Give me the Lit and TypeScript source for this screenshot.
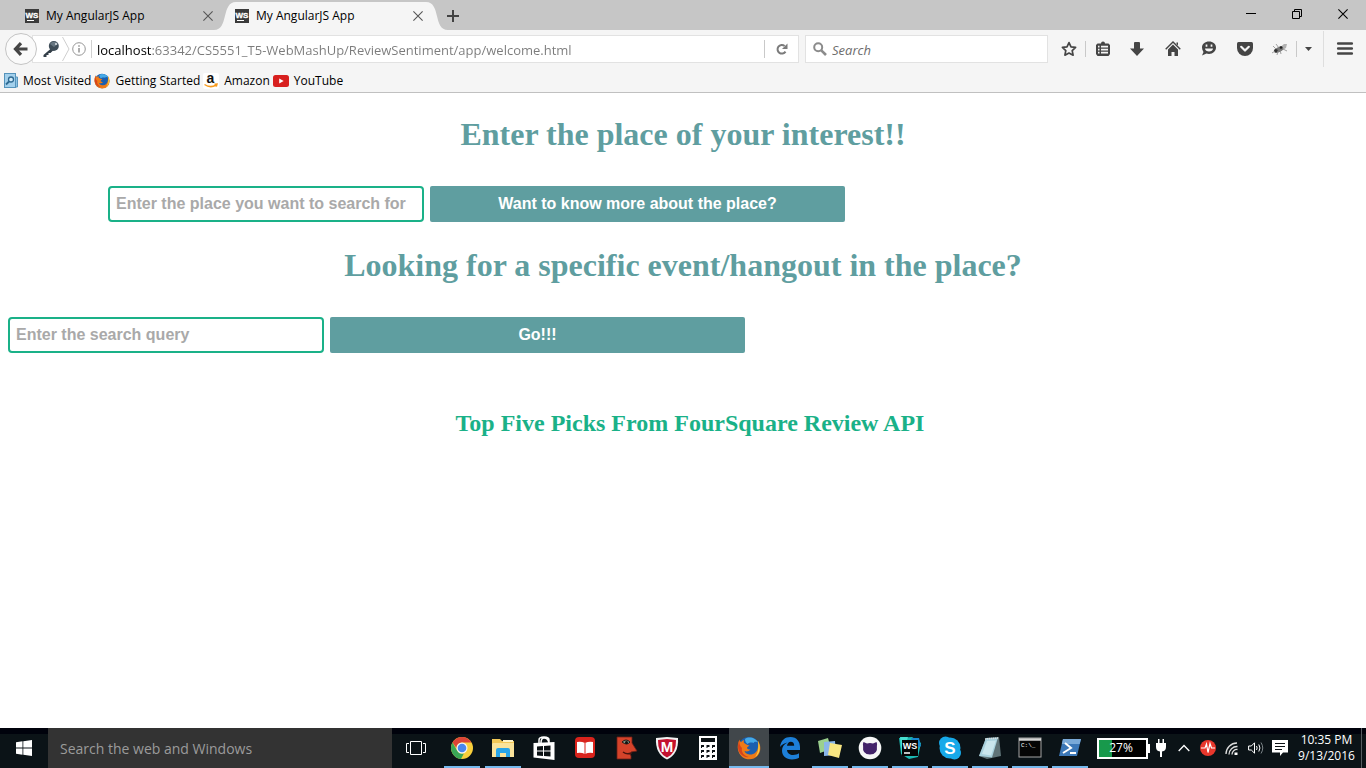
import { LitElement, html, svg, css } from "lit";
import { customElement, state } from "lit/decorators.js";

const wsBadge = html`<svg width="14" height="14" viewBox="0 0 14 14" aria-hidden="true">
  <rect width="14" height="14" fill="#3b3b3b" />
  <text x="7" y="9" text-anchor="middle" font-family="Liberation Sans, sans-serif" font-weight="700" font-size="8" fill="#fff" stroke="#fff" stroke-width=".3">WS</text>
  <rect x="2" y="11" width="7" height="1" fill="#fff" />
</svg>`;

const cross = (w: number, color: string) => html`<svg width=${w} height=${w} viewBox="0 0 10 10" aria-hidden="true">
  <path d="M0.4 0.4 9.6 9.6M9.6 0.4 0.4 9.6" stroke=${color} stroke-width="1.1" fill="none" />
</svg>`;

const firefoxArt = svg`
  <circle cx="12" cy="12" r="11" fill="#1c5fae" />
  <path d="M8 3C12 0 19 2 21.500 7c-3-2-4-1-5 0-3-1-5 0-6 1C9 7 8 5 8 3Z" fill="#45a9e6" />
  <path d="M2.500 3.500C1 7 .3 10 1 14c1.500 6 6 9.300 11.500 9.300C19 23.300 23.500 18 23.300 12c0-3-1-5.500-2.300-7 .5 2 .5 4 0 6-.5 5-4.500 8-8.500 7.500-3-.3-4.500-2-5-3.500 2 1 4.500.5 6-1.500-2 0-3-.5-3.500-1.500.3-1.500 2-1.500 2.500-2.500-1.500-.5-3.500-.7-4.500-2C6.500 7 6.500 5.500 7 4 5.500 4.500 4.500 5.500 4 6.200 3 5.500 2.500 4.500 2.500 3.500Z" fill="#ee7a16" />
  <path d="M21 5c3 6 2 13-3 16 3-4 4-8 3-16Z" fill="#fbcf3d" />
  <path d="M2.500 4C2 8 3 10 5 12c-1 4 2 8 7 9-6 1-11-4-11-10 0-3 .5-5 1.500-7Z" fill="#d8441a" />`;

const icons = {
  back: html`<svg width="16" height="14" viewBox="0 0 16 14"><path d="M8 1.200 2.500 7 8 12.800M3 7h11.500" fill="none" stroke="#454545" stroke-width="3.200" /></svg>`,
  key: html`<svg width="18" height="18" viewBox="0 0 18 18">
    <path d="M9 8.500 1.500 15v2h3v-2h2v-2h2l3-3Z" fill="#343f48" />
    <circle cx="11.800" cy="6" r="5" fill="#3f4d58" /><path d="M8 4c2-3 6-3 8 0l-4 3Z" fill="#677681" /><circle cx="14" cy="4" r="1" fill="#dfe4e8" />
  </svg>`,
  chevron: html`<svg width="8" height="24" viewBox="0 0 8 24"><path d="M.5 0 7 12 .5 24" fill="none" stroke="#cfcfcf" /></svg>`,
  info: html`<svg width="14" height="14" viewBox="0 0 14 14"><circle cx="7" cy="7" r="6.300" fill="none" stroke="#969696" /><path d="M7 6v4.500M7 3.300v1.400" stroke="#8b8b8b" stroke-width="1.400" /></svg>`,
  reload: html`<svg width="12" height="12" viewBox="0 0 12 12"><path d="M8.600 3A4.300 4.300 0 1 0 9.500 8.600" fill="none" stroke="#7b7b7b" stroke-width="2" /><path d="M11.500.5v5.500H6Z" fill="#7b7b7b" /></svg>`,
  magnifier: html`<svg width="14" height="14" viewBox="0 0 14 14"><circle cx="5.200" cy="5.200" r="4" fill="none" stroke="#8b8b8b" stroke-width="2" /><path d="m8.300 8.300 4.700 4.700" stroke="#8b8b8b" stroke-width="2.600" /></svg>`,
  star: html`<svg width="16" height="16" viewBox="0 0 16 16"><path d="m8 1.600 2 4.200 4.600.6-3.400 3.200.9 4.600L8 12l-4.100 2.200.9-4.600L1.400 6.400 6 5.800Z" fill="none" stroke="#454545" stroke-width="1.700" stroke-linejoin="round" /></svg>`,
  list: html`<svg width="14" height="16" viewBox="0 0 14 16"><path d="M5 2.500a2 2 0 0 1 4 0h3.500L14 4v9l-1.500 2h-11L0 13V4l1.500-1.500Z" fill="#454545" /><path d="M2 5.700h1.500M5 5.700h7M2 8.700h1.500M5 8.700h7M2 11.700h1.500M5 11.700h7" stroke="#f5f5f5" stroke-width="1.700" /></svg>`,
  download: html`<svg width="14" height="14" viewBox="0 0 14 14"><path d="M4 1q0-1 1-1h4q1 0 1 1v5.500h4L7 14 0 6.500h4Z" fill="#454545" /></svg>`,
  home: html`<svg width="16" height="15" viewBox="0 0 16 15"><path d="M.7 8.300 8 1l7.300 7.300" fill="none" stroke="#454545" stroke-width="1.400" /><path d="M8 3.500 13 8.500V15H9.500v-4h-3v4H3V8.500ZM11.500 1.500H13v3l-1.500-1.500Z" fill="#454545" /></svg>`,
  chat: html`<svg width="16" height="15" viewBox="0 0 16 15"><path d="M8 .5c4 0 7 2.500 7 6s-3 6.500-7 6.500c-1 0-2-.2-2.500-.4L1 14.500l1.500-3.600C1.500 9.500 1 8 1 6.500c0-3.500 3-6 7-6Z" fill="#454545" /><path d="M4 7.500h8c0 4-8 4-8 0Z" fill="#f5f5f5" /><path d="M5.500 3.500v2.300M10.500 3.500v2.300" stroke="#f5f5f5" stroke-width="1.700" /></svg>`,
  pocket: html`<svg width="16" height="14" viewBox="0 0 16 14"><path d="M1.500 0h13Q16 0 16 1.500V6a8 8 0 0 1-16 0V1.500Q0 0 1.500 0Z" fill="#454545" /><path d="M4.200 4.800 8 8.500l3.800-3.700" fill="none" stroke="#f5f5f5" stroke-width="2.200" stroke-linecap="round" stroke-linejoin="round" /></svg>`,
  bug: html`<svg width="16" height="14" viewBox="0 0 16 14"><path d="M6 7 12 2l3 0-1 4-5 3Z" fill="#b1b1b1" /><ellipse cx="7" cy="7.500" rx="4.500" ry="2.500" transform="rotate(-25 7 7.500)" fill="#777" /><circle cx="3.800" cy="8.800" r="1.900" fill="#333" /><circle cx="9" cy="5.500" r="1.300" fill="#222" /><path d="m1 4 3 3M4 2l3 4M5 13l1-4M9 12 8 8M15 9l-4-2M0 11l3-2" stroke="#8c8c8c" stroke-width=".8" /></svg>`,
  caretDown: html`<svg width="7" height="4" viewBox="0 0 7 4"><path d="M0 0h7L3.500 4Z" fill="#454545" /></svg>`,
  menu: html`<svg width="16" height="14" viewBox="0 0 16 14"><path d="M1.200 1.500h13.600M1.200 6.500h13.600M1.200 11.500h13.600" stroke="#454545" stroke-width="2.600" stroke-linecap="round" /></svg>`,
  plus: html`<svg width="12" height="12" viewBox="0 0 12 12"><path d="M6 0v12M0 6h12" stroke="#424242" stroke-width="2" /></svg>`,
  minimize: html`<svg width="10" height="10" viewBox="0 0 10 10"><path d="M0 4.500h10" stroke="#000" /></svg>`,
  restore: html`<svg width="10" height="10" viewBox="0 0 10 10"><path d="M.5 2.500h7v7h-7ZM2.500 2.500v-2h7v7h-2" fill="none" stroke="#000" /></svg>`,
  visited: html`<svg width="14" height="16" viewBox="0 0 14 16"><path d="M10 4h3.500v10H10Z" fill="#8ec4e4" stroke="#5a96bd" /><rect x=".5" y=".5" width="11" height="14" fill="#a3d0ec" stroke="#5593bb" /><circle cx="7" cy="6.500" r="2.500" fill="#d2ebfa" stroke="#2f6b93" stroke-width="1.300" /><path d="m5 8.500-3 3" stroke="#2f6b93" stroke-width="1.800" /></svg>`,
  firefoxSmall: html`<svg width="16" height="16" viewBox="0 0 24 24">${firefoxArt}</svg>`,
  amazon: html`<svg width="16" height="16" viewBox="0 0 16 16"><rect width="16" height="16" rx="2" fill="#fff" /><text x="7.500" y="10" text-anchor="middle" font-family="Liberation Sans, sans-serif" font-weight="700" font-size="14" fill="#111">a</text><path d="M1.500 11.500q6 4 11.500.5M11.500 11.200l2.500-.2-.7 2.600" fill="none" stroke="#f79a1c" stroke-width="1.500" /></svg>`,
  youtube: html`<svg width="16" height="12" viewBox="0 0 16 12"><rect width="16" height="12" rx="2.500" fill="#d8201f" /><path d="M6.200 3.500v5l4.500-2.500Z" fill="#fff" /></svg>`,
  windows: html`<svg width="16" height="16" viewBox="0 0 16 16"><path d="M0 2.200 6.500 1.300v6.200H0ZM7.300 1.200 16 0v7.500H7.300ZM0 8.400h6.500v6.300L0 13.800ZM7.300 8.400H16V16l-8.700-1.200Z" fill="#fff" /></svg>`,
  taskView: html`<svg width="20" height="14" viewBox="0 0 20 14"><path d="M4.500.5h11v13h-11ZM3 2.500H.5v9H3M17 2.500h2.500v9H17" fill="none" stroke="#fff" /></svg>`,
};

const ic = (w: number, h: number, body: unknown) =>
  html`<svg width=${w} height=${h} viewBox="0 0 24 24" aria-hidden="true">${body}</svg>`;

interface TaskApp {
  name: string;
  art: unknown;
  running?: boolean;
  active?: boolean;
}

const pinned: TaskApp[] = [
  { name: "Chrome", running: true, art: ic(24, 24, svg`
    <circle cx="12" cy="12" r="11" fill="#f9cf3c" />
    <path d="M2.500 6.500A11 11 0 0 1 21.500 6.500H12A5.500 5.500 0 0 0 6.500 12Z" fill="#dc4437" />
    <path d="M2.500 6.500 7.200 14.700A5.500 5.500 0 0 0 14 17.200L11 23A11 11 0 0 1 2.500 6.500Z" fill="#3aa757" />
    <circle cx="12" cy="12" r="5.500" fill="#f4f4f4" /><circle cx="12" cy="12" r="4.300" fill="#4a87ee" />`) },
  { name: "File Explorer", running: true, art: ic(24, 24, svg`
    <path d="M1 3h8l2 2h12v16H1Z" fill="#f3c857" /><path d="M2 7h21v14H1V8Z" fill="#fbe39a" /><path d="M12 4h10v2H12Z" fill="#fff3c7" />
    <path d="M5 21v-7q0-2 2-2h10q2 0 2 2v7h-4v-4H9v4Z" fill="#2aa5e8" />`) },
  { name: "Store", art: ic(24, 24, svg`
    <path d="M7 8V4q0-3 5-3t5 3v4M9 7q0-5 3-5 4 0 5 5" fill="none" stroke="#fff" stroke-width="1.500" />
    <path d="M1.500 7 22.500 6v18L1.500 21.500Z" fill="#fff" /><path d="M5 10.500 11 10v4.500H5ZM12 10l6.500-.5v5H12ZM5 15.500h6V20l-6-.5ZM12 15.500h6.500v5L12 20Z" fill="#0b1114" />`) },
  { name: "Reader", art: ic(24, 24, svg`
    <rect x="2" y="1" width="20" height="21" rx="4" fill="#d9231c" /><path d="M4 6q4-1 8 1 4-2 8-1v11q-4-1-8 1-4-2-8-1Z" fill="#fff" /><path d="M12 7v11" stroke="#d9231c" />`) },
  { name: "Face", art: ic(24, 24, svg`
    <path d="M3 1h15v6l5 8-6 1v2h-1l1 2v3H3Z" fill="#d5432a" stroke="#6c1f16" stroke-width=".8" />
    <path d="M8 6q4-4 8 0-3 4-8 0Z" fill="#7a9181" stroke="#221917" /><circle cx="12.500" cy="6.500" r="1.500" fill="#15110f" /><path d="M9 16q4 3 8 1" stroke="#4c140e" stroke-width="1.500" fill="none" />`) },
  { name: "McAfee", art: ic(24, 24, svg`
    <path d="M1 2 12 1l11 1q1 16-11 21.500Q0 18 1 2Z" fill="#f2f2f2" /><path d="M3 4l9-1 9 1q.5 13-9 17.500Q2.500 17 3 4Z" fill="#c4122f" />
    <text x="12" y="16" text-anchor="middle" font-family="Liberation Sans, sans-serif" font-weight="700" font-size="15" fill="#fff">M</text>`) },
  { name: "Calculator", art: ic(24, 24, svg`
    <path d="M3 0h18v24H3Z" fill="#fff" /><path d="M5 2h14v4H5Z" fill="#0b1114" />
    <g fill="#0b1114">${[9, 14, 19].map((y) => [5, 10.500, 16].map((x) => svg`<path d="M${x} ${y}h3v2h-2v1h-1Z" />`))}</g>`) },
  { name: "Firefox", running: true, active: true, art: ic(24, 24, firefoxArt) },
  { name: "Edge", art: ic(24, 24, svg`
    <path d="M2 11C3 4 7 1 12.500 1 19 1 22 6 22 11v3H9c.3 3.500 3 5 6 5 2.500 0 4.500-.7 6-1.700v4.500C19 23 17 23.500 14 23.500 8 23.500 4 20 4 14.500c0-3.500 2-6.500 5.500-8C6 7 3.500 9 2 11Zm7-1.200h7.200c0-2.500-1.200-4-3.400-4S9.300 7.500 9 9.800Z" fill="#1d7fd8" />`) },
];

const opened: TaskApp[] = [
  { name: "Sticky Notes", running: true, art: ic(24, 24, svg`
    <path d="m0 5 10-3 3 11-11 4Z" fill="#9bd08e" /><path d="M6 6 17 5l1 14-12 1Z" fill="#8ab6ea" /><path d="m12 7 12 2-3 13-11-3Z" fill="#f8e682" />`) },
  { name: "GitHub", running: true, art: ic(24, 24, svg`
    <circle cx="12" cy="12" r="11.300" fill="#f7f7f7" /><path d="M5.500 6 9 7.500q3-.8 6 0L18.500 6q1 2 .4 4Q20 18.500 12 18.500T5.100 10Q4.500 8 5.500 6Z" fill="#432369" />`) },
  { name: "WebStorm", running: true, art: ic(24, 24, svg`
    <path d="M1 2 14 1l9 6-3 14-9 2-8-5Z" fill="#1cb9b2" /><path d="m13 2 8 0 2 8-6 4Z" fill="#1889ce" /><path d="M2 1h8L4 20Z" fill="#48dfd0" />
    <rect x="4" y="4" width="16" height="16" fill="#050505" /><text x="12" y="12.500" text-anchor="middle" font-family="Liberation Sans, sans-serif" font-weight="700" font-size="9" fill="#fff">WS</text><path d="M6 17h6" stroke="#fff" stroke-width="1.500" />`) },
  { name: "Skype", running: true, art: ic(24, 24, svg`
    <circle cx="7.500" cy="7" r="6.500" fill="#17a9e9" /><circle cx="16.500" cy="17" r="6.500" fill="#17a9e9" /><circle cx="12" cy="12" r="10.500" fill="#17a9e9" />
    <text x="12" y="18" text-anchor="middle" font-family="Liberation Sans, sans-serif" font-weight="700" font-size="17" fill="#fff">S</text>`) },
  { name: "Notepad", running: true, art: ic(24, 24, svg`
    <path d="M8 2 21 1l2 19-14 3-8-3Z" fill="#5f7377" /><path d="m8 2 12-.5-6 20L1 20Z" fill="#a8d0dc" /><path d="m9 5 9-.5-5 15L4 18Z" fill="#c9e5ec" /><path d="m7 3 13-1" stroke="#dedede" stroke-width="1.500" stroke-dasharray="1 1" />`) },
  { name: "Command Prompt", running: true, art: ic(24, 24, svg`
    <rect x="1" y="2" width="22" height="19" fill="#050505" stroke="#a5a5a5" /><path d="M1 3.500h22" stroke="#d4d4d4" stroke-width="2.500" />
    <text x="3" y="11" font-family="Liberation Mono, monospace" font-size="6" fill="#fff">C:\\_</text>`) },
  { name: "PowerShell", running: true, art: ic(24, 24, svg`
    <path d="M5 3h18l-4 17H1Z" fill="#3c78b8" /><path d="M5 3h18l-1.300 5H3.800Z" fill="#79a9d8" /><path d="m7 7 6 5-8 5M12 17h6" fill="none" stroke="#fff" stroke-width="2" />`) },
];

const tray = {
  plug: html`<svg width="12" height="18" viewBox="0 0 12 18"><path d="M3 0h1.500v4h3V0H9v4h2v4q0 4-4 4.500V18H5v-5.500Q1 12 1 8V4h2Z" fill="#fff" /></svg>`,
  caret: html`<svg width="12" height="8" viewBox="0 0 12 8"><path d="m.7 7 5.300-5.500L11.300 7" fill="none" stroke="#fff" stroke-width="1.300" /></svg>`,
  pulse: html`<svg width="16" height="16" viewBox="0 0 16 16"><circle cx="8" cy="8" r="8" fill="#e8372c" /><path d="M1 8h4l1.500-4 1.500 8.500L10 3.500 11.500 8H15" fill="none" stroke="#fff" stroke-width="1.200" /></svg>`,
  wifi: html`<svg width="14" height="13" viewBox="0 0 14 13"><path d="M1 12A11 11 0 0 1 12 1M4 12.500A8 8 0 0 1 12.500 4.500M7 12.500A5 5 0 0 1 12.500 7.500" fill="none" stroke="#ddd" stroke-width="1.300" /><path d="M9.500 10.500h3V13h-3Z" fill="#fff" /></svg>`,
  sound: html`<svg width="16" height="14" viewBox="0 0 16 14"><path d="M.6 5h2.700L6.500 1.800v10.400L3.300 9H.6Z" fill="none" stroke="#fff" /><path d="M8.500 5q1.300 2 0 4M10.800 3.500q2.300 3.500 0 7" fill="none" stroke="#fff" /><path d="M13 1.500q3.500 5.500 0 11" fill="none" stroke="#7d8589" /></svg>`,
  note: html`<svg width="16" height="16" viewBox="0 0 16 16"><path d="M0 0h16v12.500h-5L8 16V12.500H0Z" fill="#fff" /><path d="M3 3.500h10M3 6.500h10M3 9.500h7" stroke="#0b1114" /></svg>`,
};

@customElement("app-root")
export class AppRoot extends LitElement {
  @state() private url = "localhost:63342/CS5551_T5-WebMashUp/ReviewSentiment/app/welcome.html";

  static styles = css`
    :host {
      display: flex;
      flex-direction: column;
      min-height: 100vh;
      background: #fff;
      color: #000;
      font: 12px/16px "Open Sans", "Noto Sans", sans-serif;
    }
    * { box-sizing: border-box; }
    svg { display: block; flex: none; overflow: visible; }
    button {
      display: flex;
      align-items: center;
      justify-content: center;
      border: 0;
      padding: 0;
      background: none;
      color: inherit;
      font: inherit;
      flex: none;
    }
    input { border: 0; padding: 0; min-width: 0; outline: none; background: none; }
    a { color: inherit; text-decoration: none; }

    .tabs { display: flex; height: 30px; background: #c6c6c6; padding-left: 10px; }
    .tab {
      display: flex;
      align-items: center;
      gap: 7px;
      width: 210px;
      padding: 2px 6px 0 15px;
      position: relative;
    }
    .tab-title { flex: 1; white-space: nowrap; }
    .tab > * { position: relative; }
    .tab > .tab-shape { position: absolute; left: -6px; top: 2px; }
    .close { width: 12px; height: 16px; }
    .new-tab { width: 24px; margin: 2px auto 0 11px; }
    .window-button { width: 46px; height: 28px; }

    .nav { display: flex; align-items: center; height: 37px; background: #f5f5f5; padding-left: 5px; }
    .back {
      width: 32px;
      height: 32px;
      border: 1px solid #c4c4c4;
      border-radius: 50%;
      background: #fafafa;
      position: relative;
    }
    .address {
      flex: 1;
      display: flex;
      align-items: center;
      height: 28px;
      margin-left: -5px;
      padding-left: 9px;
      border: 1px solid #e2e2e2;
      background: #fff;
    }
    .identity { display: flex; align-items: center; gap: 2px; padding-right: 5px; border-right: 1px solid #d0d0d0; height: 18px; }
    .url {
      flex: 1;
      height: 24px;
      margin: 0 5px;
      padding-top: 2px;
      font: 13px/20px "Open Sans", "Noto Sans", sans-serif;
      color: transparent;
      background: linear-gradient(to right, #000 55px, #7b7b7b 55px);
      background-clip: text;
      -webkit-background-clip: text;
    }
    .reload { width: 34px; height: 18px; border-left: 1px solid #c9c9c9; }
    .search {
      flex: 0 1 243px;
      display: flex;
      align-items: center;
      gap: 5px;
      height: 28px;
      margin-left: 6px;
      padding: 0 7px;
      border: 1px solid #e2e2e2;
      background: #fff;
    }
    .search input { flex: 1; padding-top: 2px; font: italic 13px/20px "Open Sans", "Noto Sans", sans-serif; }
    .search input::placeholder { color: #6d6d6d; opacity: 1; }
    .tools { display: flex; align-items: center; margin-left: 4px; }
    .tool { width: 36px; height: 28px; }
    .rule { width: 1px; height: 16px; background: #c9c9c9; }
    .slim { width: 33px; }
    .narrow { width: 22px; }
    .menu { width: 43px; height: 36px; border-left: 1px solid #dedede; margin-left: 4px; }

    .bookmarks {
      display: flex;
      align-items: center;
      gap: 3px;
      height: 26px;
      padding: 2px 0 0 4px;
      border-bottom: 1px solid #c0c0c0;
      background: #f5f5f5;
    }
    .bookmark { display: flex; align-items: center; gap: 5px; white-space: nowrap; }

    .page { flex: 1; padding: 23px 8px; font-family: "Liberation Serif", "Times New Roman", serif; }
    h1 { margin: 0; font-size: 32px; line-height: 36px; color: cadetblue; text-align: center; }
    h2 { margin: 56px 0 0; padding-left: 14px; font-size: 24px; line-height: 28px; color: #1ab188; text-align: center; }
    .form { display: flex; gap: 6px; margin: 34px 0 25px; }
    .indent { padding-left: 100px; }
    .field, .submit { font: bold 16px/20px "Liberation Sans", Arial, sans-serif; height: 36px; }
    .field { width: 316px; padding: 0 6px; border: 2px solid #1ab188; border-radius: 4px; background: #fff; }
    .field::placeholder { color: #a9a9a9; opacity: 1; }
    .submit { width: 415px; border-radius: 2px; background: cadetblue; color: #fff; }

    .taskbar {
      display: flex;
      height: 40px;
      background: linear-gradient(#00020c 6px, #0b1317 6px);
      color: #fff;
    }
    .start, .task-view { width: 48px; }
    .cortana {
      flex: 0 1 344px;
      padding: 2px 12px 0;
      background: #333;
      font: 14px/20px "Open Sans", "Noto Sans", sans-serif;
    }
    .cortana::placeholder { color: #9b9b9b; opacity: 1; }
    .apps { display: flex; }
    .pinned { gap: 1px; margin-left: 2px; }
    .app { width: 40px; border-bottom: 2px solid transparent; padding: 2px 4px 0; }
    .app.running { border-image: linear-gradient(to right, transparent 4px, #76b9ed 4px, #76b9ed 36px, transparent 36px) 2; }
    .app.active { background: #41474b; border-image: none; border-bottom-color: #76b9ed; }
    .tray { display: flex; align-items: center; margin-left: auto; padding-right: 4px; }
    .battery { display: flex; align-items: center; }
    .cell {
      width: 51px;
      height: 21px;
      padding-right: 3px;
      border: 2px solid #fff;
      background: linear-gradient(to right, #18994c 27%, #000 27%);
      text-align: center;
      line-height: 16px;
    }
    .nub { width: 2px; height: 9px; background: #fff; }
    .tray-button { width: 24px; height: 40px; }
    .plug { width: 22px; }
    .clock {
      flex-direction: column;
      width: 70px;
      height: 40px;
      border-right: 1px solid #555d61;
      white-space: nowrap;
    }
  `;

  private tab(active: boolean) {
    return html`<div class="tab" role="tab" aria-selected=${active}>
      ${active
        ? html`<svg class="tab-shape" width="234" height="28" viewBox="0 0 234 28" aria-hidden="true">
            <path d="M0 28C15 28 7 0 22 0H212C227 0 219 28 234 28Z" fill="#f5f5f5" />
          </svg>`
        : ""}
      ${wsBadge}<span class="tab-title">My AngularJS App</span>
      <button class="close" aria-label="Close tab">${cross(10, "#555")}</button>
    </div>`;
  }

  private app(a: TaskApp) {
    return html`<button class="app ${a.running ? "running" : ""} ${a.active ? "active" : ""}" aria-label=${a.name}>${a.art}</button>`;
  }

  render() {
    return html`
      <div class="tabs">
        ${this.tab(false)}${this.tab(true)}
        <button class="new-tab" aria-label="New tab">${icons.plus}</button>
        <button class="window-button" aria-label="Minimize">${icons.minimize}</button>
        <button class="window-button" aria-label="Restore">${icons.restore}</button>
        <button class="window-button" aria-label="Close">${cross(10, "#000")}</button>
      </div>

      <nav class="nav">
        <button class="back" aria-label="Back">${icons.back}</button>
        <div class="address">
          <div class="identity">${icons.key}${icons.chevron}${icons.info}</div>
          <input class="url" aria-label="Address" .value=${this.url} />
          <button class="reload" aria-label="Reload">${icons.reload}</button>
        </div>
        <div class="search">
          ${icons.magnifier}
          <input aria-label="Search" placeholder="Search" />
        </div>
        <div class="tools">
          <button class="tool slim" aria-label="Bookmark this page">${icons.star}</button>
          <span class="rule"></span>
          <button class="tool slim" aria-label="Show bookmarks">${icons.list}</button>
          <button class="tool" aria-label="Downloads">${icons.download}</button>
          <button class="tool" aria-label="Home">${icons.home}</button>
          <button class="tool" aria-label="Chat">${icons.chat}</button>
          <button class="tool" aria-label="Pocket">${icons.pocket}</button>
          <button class="tool slim" aria-label="Firebug">${icons.bug}</button>
          <span class="rule"></span>
          <button class="tool narrow" aria-label="Firebug options">${icons.caretDown}</button>
          <button class="menu" aria-label="Menu">${icons.menu}</button>
        </div>
      </nav>

      <div class="bookmarks">
        <a class="bookmark" href="#">${icons.visited}Most Visited</a>
        <a class="bookmark" href="#">${icons.firefoxSmall}Getting Started</a>
        <a class="bookmark" href="#">${icons.amazon}Amazon</a>
        <a class="bookmark" href="#">${icons.youtube}YouTube</a>
      </div>

      <main class="page">
        <h1>Enter the place of your interest!!</h1>
        <form class="form indent" @submit=${(e: Event) => e.preventDefault()}>
          <input class="field" aria-label="Place" placeholder="Enter the place you want to search for" />
          <button class="submit">Want to know more about the place?</button>
        </form>
        <h1>Looking for a specific event/hangout in the place?</h1>
        <form class="form" @submit=${(e: Event) => e.preventDefault()}>
          <input class="field" aria-label="Search query" placeholder="Enter the search query" />
          <button class="submit">Go!!!</button>
        </form>
        <h2>Top Five Picks From FourSquare Review API</h2>
      </main>

      <footer class="taskbar">
        <button class="start" aria-label="Start">${icons.windows}</button>
        <input class="cortana" aria-label="Search the web and Windows" placeholder="Search the web and Windows" />
        <button class="task-view" aria-label="Task view">${icons.taskView}</button>
        <div class="apps pinned">${pinned.map((a) => this.app(a))}</div>
        <div class="apps">${opened.map((a) => this.app(a))}</div>
        <div class="tray">
          <div class="battery"><span class="cell">27%</span><span class="nub"></span></div>
          <button class="tray-button plug" aria-label="Power">${tray.plug}</button>
          <button class="tray-button" aria-label="Show hidden icons">${tray.caret}</button>
          <button class="tray-button" aria-label="Monitor">${tray.pulse}</button>
          <button class="tray-button" aria-label="Network">${tray.wifi}</button>
          <button class="tray-button" aria-label="Volume">${tray.sound}</button>
          <button class="tray-button" aria-label="Notifications">${tray.note}</button>
          <button class="clock"><span>10:35 PM</span><span>9/13/2016</span></button>
        </div>
      </footer>
    `;
  }
}
